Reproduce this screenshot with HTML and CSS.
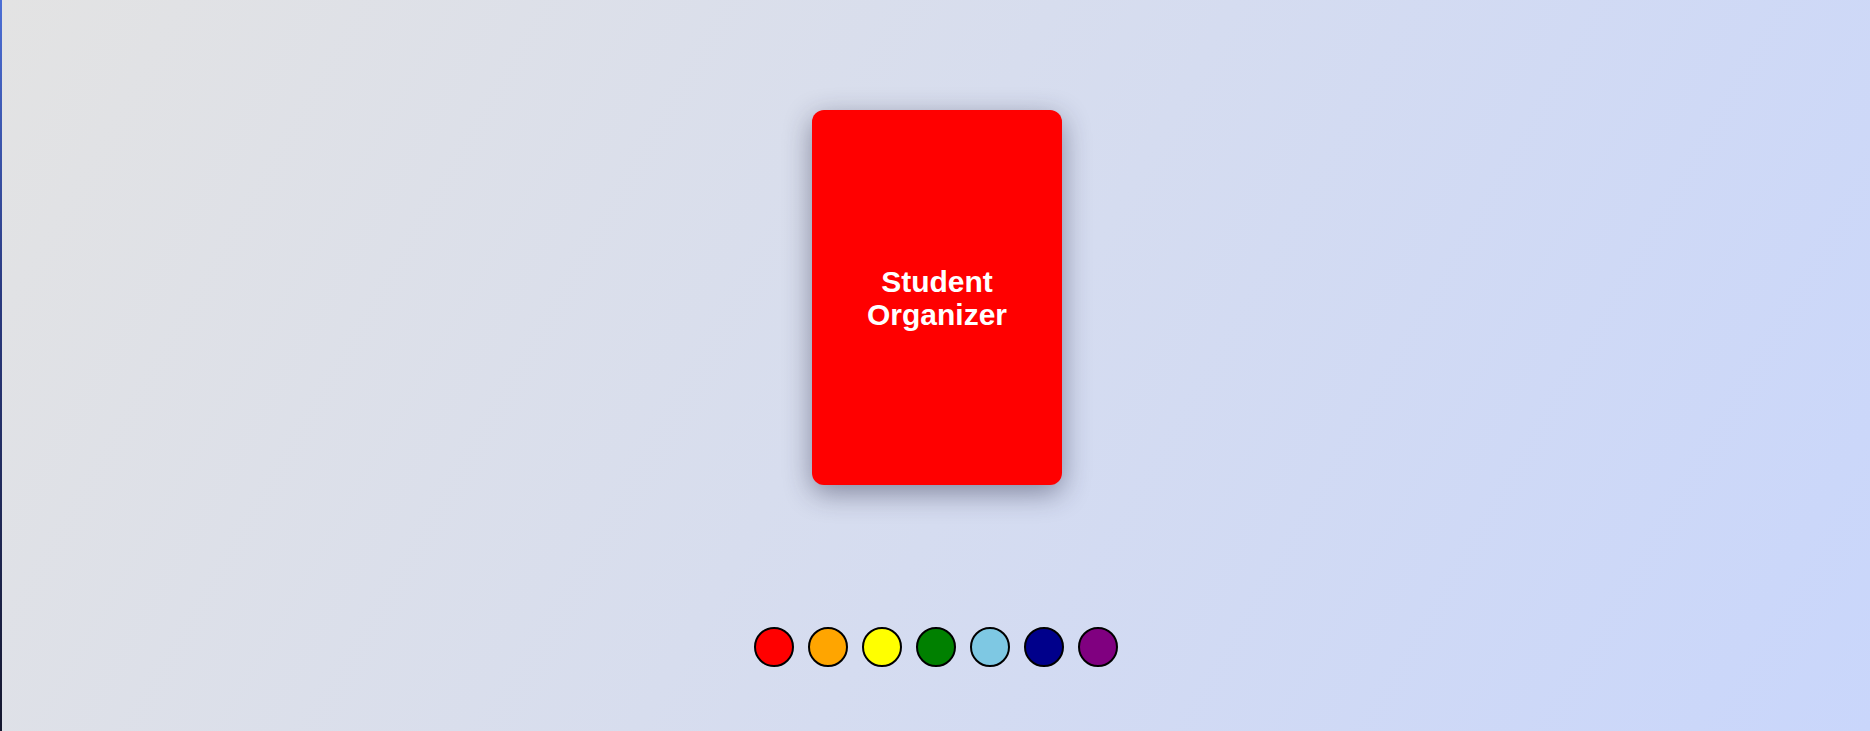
FILE: index.html
```html
<!DOCTYPE html>
<html lang="en">
<head>
<meta charset="utf-8">
<title>Student Organizer</title>
<link rel="stylesheet" href="styles.css">
</head>
<body>
<main class="stage">
  <div class="card">
    <h1 class="card-title">Student<br>Organizer</h1>
  </div>
  <div class="swatches">
    <button class="swatch swatch-red" aria-label="red"></button>
    <button class="swatch swatch-orange" aria-label="orange"></button>
    <button class="swatch swatch-yellow" aria-label="yellow"></button>
    <button class="swatch swatch-green" aria-label="green"></button>
    <button class="swatch swatch-sky" aria-label="light blue"></button>
    <button class="swatch swatch-navy" aria-label="navy"></button>
    <button class="swatch swatch-purple" aria-label="purple"></button>
  </div>
</main>
</body>
</html>
```

FILE: styles.css
```css
html, body {
  margin: 0;
  padding: 0;
  height: 100%;
}
body {
  font-family: "Liberation Sans", Arial, sans-serif;
  background: linear-gradient(120deg, #e3e3e3 0%, #c9d6fb 100%);
  border-left: 2px solid;
  border-image: linear-gradient(to bottom, #4c6fd6 0%, #2a3a80 40%, #15172e 100%) 1;
  box-sizing: border-box;
  overflow: hidden;
}
.stage {
  display: flex;
  flex-direction: column;
  align-items: center;
  padding-top: 110px;
  padding-left: 2px;
}
.card {
  width: 250px;
  height: 375px;
  background: #ff0000;
  border-radius: 12px;
  box-shadow: 0 8px 28px rgba(30, 30, 60, 0.45);
  display: flex;
  align-items: center;
  justify-content: center;
}
.card-title {
  margin: 0;
  color: #ffffff;
  font-size: 30px;
  font-weight: 700;
  text-align: center;
  line-height: 33px;
}
.swatches {
  display: flex;
  gap: 14px;
  margin-top: 142px;
  margin-right: 2px;
}
.swatch {
  width: 40px;
  height: 40px;
  border-radius: 50%;
  border: 2px solid #000;
  padding: 0;
  box-sizing: border-box;
  cursor: pointer;
}
.swatch-red { background: #ff0000; }
.swatch-orange { background: #ffa500; }
.swatch-yellow { background: #ffff00; }
.swatch-green { background: #008000; }
.swatch-sky { background: #7ec8e3; }
.swatch-navy { background: #00008b; }
.swatch-purple { background: #800080; }
```
